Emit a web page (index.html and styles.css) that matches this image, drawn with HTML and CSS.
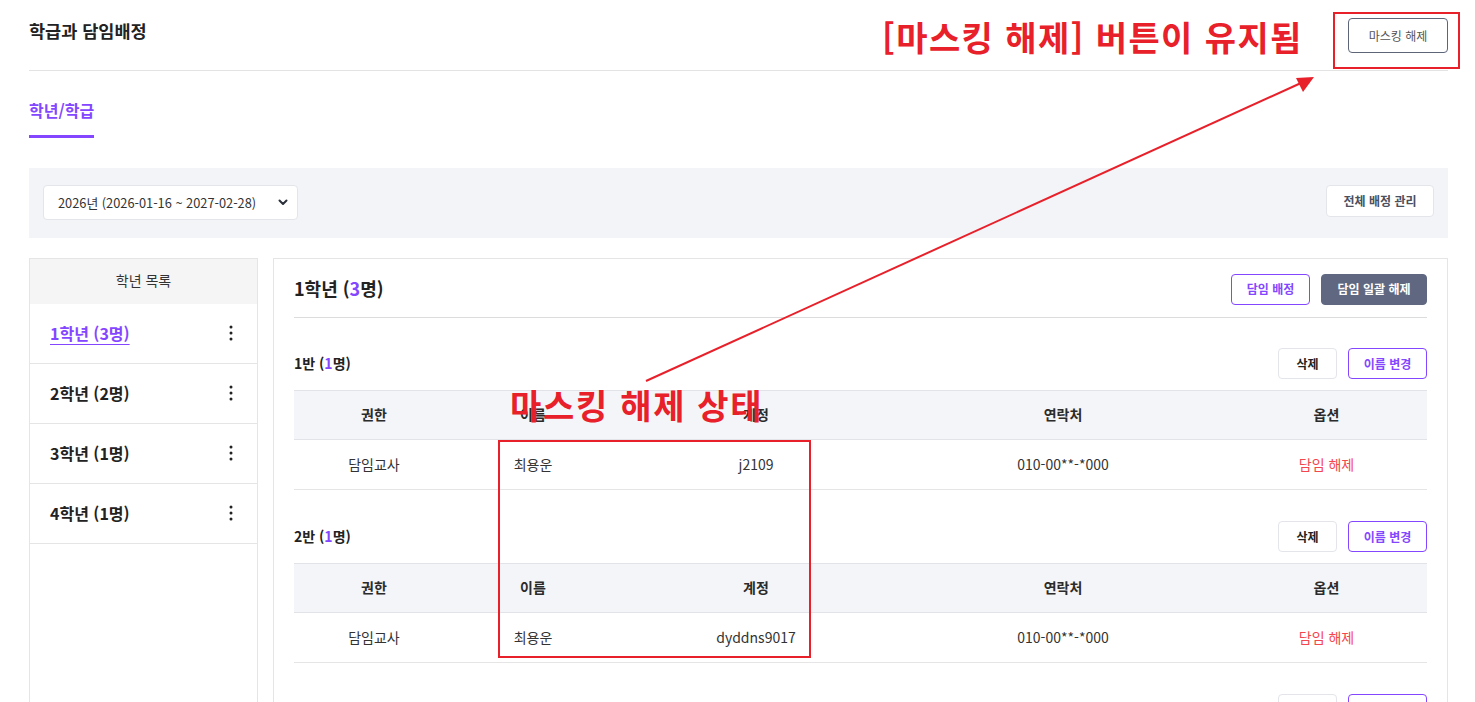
FILE: index.html
```html
<!DOCTYPE html>
<html lang="ko">
<head>
<meta charset="utf-8">
<title>학급과 담임배정</title>
<link rel="stylesheet" href="styles.css">
</head>
<body>
<div class="page">
  <header class="top">
    <h1 class="title">학급과 담임배정</h1>
    <button class="btn mask-btn">마스킹 해제</button>
  </header>

  <nav class="tabs">
    <a class="tab active">학년/학급</a>
  </nav>

  <div class="filter">
    <div class="select">
      <span>2026년 (2026-01-16 ~ 2027-02-28)</span>
      <svg class="chev" width="10" height="7" viewBox="0 0 10 7"><path d="M1.5 1.5 L5 5 L8.5 1.5" fill="none" stroke="#2a2f3a" stroke-width="2" stroke-linecap="round" stroke-linejoin="round"/></svg>
    </div>
    <button class="btn btn-white">전체 배정 관리</button>
  </div>

  <div class="content">
    <aside class="sidebar">
      <div class="side-head">학년 목록</div>
      <ul class="grade-list">
        <li class="grade active"><span class="grade-name">1학년 (3명)</span><svg class="kebab" width="4" height="16" viewBox="0 0 4 16"><circle cx="2" cy="2" r="1.5"/><circle cx="2" cy="8" r="1.5"/><circle cx="2" cy="14" r="1.5"/></svg></li>
        <li class="grade"><span class="grade-name">2학년 (2명)</span><svg class="kebab" width="4" height="16" viewBox="0 0 4 16"><circle cx="2" cy="2" r="1.5"/><circle cx="2" cy="8" r="1.5"/><circle cx="2" cy="14" r="1.5"/></svg></li>
        <li class="grade"><span class="grade-name">3학년 (1명)</span><svg class="kebab" width="4" height="16" viewBox="0 0 4 16"><circle cx="2" cy="2" r="1.5"/><circle cx="2" cy="8" r="1.5"/><circle cx="2" cy="14" r="1.5"/></svg></li>
        <li class="grade"><span class="grade-name">4학년 (1명)</span><svg class="kebab" width="4" height="16" viewBox="0 0 4 16"><circle cx="2" cy="2" r="1.5"/><circle cx="2" cy="8" r="1.5"/><circle cx="2" cy="14" r="1.5"/></svg></li>
      </ul>
    </aside>

    <section class="main">
      <div class="main-head">
        <h2 class="grade-title">1학년 (<em>3</em>명)</h2>
        <div class="actions">
          <button class="btn btn-purple w79">담임 배정</button>
          <button class="btn btn-dark">담임 일괄 해제</button>
        </div>
      </div>

      <div class="class-block">
        <div class="class-head">
          <h3 class="class-title">1반 (<em>1</em>명)</h3>
          <div class="actions">
            <button class="btn btn-white sm">삭제</button>
            <button class="btn btn-purple w79">이름 변경</button>
          </div>
        </div>
        <div class="tbl">
          <div class="tr th"><div>권한</div><div>이름</div><div>계정</div><div>연락처</div><div>옵션</div></div>
          <div class="tr td"><div>담임교사</div><div>최용운</div><div>j2109</div><div>010-00**-*000</div><div class="red">담임 해제</div></div>
        </div>
      </div>

      <div class="class-block">
        <div class="class-head">
          <h3 class="class-title">2반 (<em>1</em>명)</h3>
          <div class="actions">
            <button class="btn btn-white sm">삭제</button>
            <button class="btn btn-purple w79">이름 변경</button>
          </div>
        </div>
        <div class="tbl">
          <div class="tr th"><div>권한</div><div>이름</div><div>계정</div><div>연락처</div><div>옵션</div></div>
          <div class="tr td"><div>담임교사</div><div>최용운</div><div>dyddns9017</div><div>010-00**-*000</div><div class="red">담임 해제</div></div>
        </div>
      </div>

      <div class="class-block">
        <div class="class-head">
          <h3 class="class-title">3반 (<em>1</em>명)</h3>
          <div class="actions">
            <button class="btn btn-white sm">삭제</button>
            <button class="btn btn-purple w79">이름 변경</button>
          </div>
        </div>
      </div>
    </section>
  </div>

  <div class="anno anno-text1">[마스킹 해제] 버튼이 유지됨</div>
  <div class="anno anno-box1"></div>
  <div class="anno anno-text2">마스킹 해제 상태</div>
  <div class="anno anno-box2"></div>
  <svg class="anno anno-arrow" width="1475" height="702" viewBox="0 0 1475 702">
    <line x1="646" y1="381" x2="1301" y2="83" stroke="#e8202a" stroke-width="2"/>
    <polygon points="1314,77 1296,78 1303,92" fill="#e8202a"/>
  </svg>
</div>
</body>
</html>
```

FILE: styles.css
```css
* { box-sizing: border-box; }

body {
  margin: 0;
  background: #fff;
  color: #222;
  font-family: "Noto Sans CJK KR", "Noto Sans", sans-serif;
}

.page {
  position: relative;
  padding: 0 27px 60px 29px;
}

.btn {
  font-family: inherit;
  font-size: 12px;
  line-height: 1;
  border-radius: 4px;
  background: #fff;
  cursor: pointer;
  padding: 0;
}

/* header */
.top {
  height: 71px;
  display: flex;
  justify-content: space-between;
  align-items: flex-start;
  border-bottom: 1px solid #e3e3e3;
}
.title {
  margin: 0;
  padding-top: 19px;
  font-size: 17.5px;
  line-height: 24px;
  font-weight: 700;
  color: #222;
}
.mask-btn {
  margin-top: 18px;
  width: 100px;
  height: 35px;
  border: 1px solid #5d6579;
  color: #555;
  font-weight: 400;
}

/* tabs */
.tabs {
  padding-top: 27px;
}
.tab {
  display: inline-block;
  font-size: 16px;
  line-height: 22px;
  font-weight: 700;
  color: #8447ff;
  padding-bottom: 14px;
  border-bottom: 3px solid #8447ff;
}

/* filter bar */
.filter {
  margin-top: 30px;
  height: 70px;
  background: #f3f4f8;
  padding: 17px 14px;
  display: flex;
  justify-content: space-between;
  align-items: flex-start;
}
.select {
  width: 255px;
  height: 35px;
  background: #fff;
  border: 1px solid #e3e5ea;
  border-radius: 4px;
  display: flex;
  align-items: center;
  justify-content: space-between;
  padding: 0 9px 0 14px;
  font-size: 12.8px;
  color: #333;
}
.btn-white {
  width: 108px;
  height: 32px;
  border: 1px solid #e3e5ea;
  color: #4a5060;
  font-weight: 700;
}

/* content */
.content {
  margin-top: 20px;
  display: flex;
  gap: 15px;
  align-items: flex-start;
}

.sidebar {
  width: 229px;
  min-height: 620px;
  border: 1px solid #e5e5e5;
}
.side-head {
  height: 45px;
  padding-bottom: 4px;
  background: #f5f5f5;
  display: flex;
  align-items: center;
  justify-content: center;
  font-size: 14px;
  color: #333;
}
.grade-list {
  list-style: none;
  margin: 0;
  padding: 0;
}
.grade {
  height: 60px;
  padding: 0 24px 2px 20px;
  border-bottom: 1px solid #e5e5e5;
  display: flex;
  align-items: center;
  justify-content: space-between;
  font-size: 16px;
  font-weight: 700;
  color: #222;
}
.grade.active .grade-name {
  color: #8447ff;
  text-decoration: underline;
  text-underline-offset: 4px;
  text-decoration-thickness: 1px;
}
.kebab { fill: #222; }

.main {
  flex: 1;
  min-height: 620px;
  border: 1px solid #e5e5e5;
  padding: 15px 20px 40px;
}
.main-head {
  height: 44px;
  padding-bottom: 13px;
  border-bottom: 1px solid #dcdcdc;
  display: flex;
  justify-content: space-between;
  align-items: center;
}
.grade-title {
  margin: 0 0 2px;
  font-size: 18px;
  font-weight: 700;
  color: #222;
}
.grade-title em, .class-title em {
  font-style: normal;
  color: #8447ff;
}
.actions {
  display: flex;
  gap: 11px;
}
.btn-purple {
  height: 31px;
  border: 1px solid #8447ff;
  color: #8447ff;
  font-weight: 700;
}
.w79 { width: 79px; }
.btn-dark {
  width: 106px;
  height: 31px;
  border: 1px solid #5f6880;
  background: #5f6880;
  color: #fff;
  font-weight: 700;
}
.btn-white.sm {
  width: 59px;
  height: 31px;
  color: #222;
}

.class-block {
  margin-top: 30px;
}
.class-block + .class-block {
  margin-top: 31px;
}
.class-head {
  height: 31px;
  margin-bottom: 11px;
  display: flex;
  justify-content: space-between;
  align-items: center;
}
.class-title {
  margin: 0 0 2px;
  font-size: 14px;
  font-weight: 700;
  color: #222;
}

.tr {
  display: grid;
  grid-template-columns: 160px 158px 288px 326px 1fr;
  align-items: center;
  text-align: center;
  font-size: 14px;
}
.th {
  height: 50px;
  padding-bottom: 2px;
  background: #f4f5f9;
  border-top: 1px solid #e2e3e8;
  border-bottom: 1px solid #e2e3e8;
  font-weight: 600;
  color: #2b2b2b;
}
.td {
  height: 50px;
  padding-bottom: 2px;
  border-bottom: 1px solid #e5e5e5;
  color: #333;
}
.red { color: #f4464f; }

/* annotations (overlay) */
.anno {
  position: absolute;
  pointer-events: none;
}
.anno-text1 {
  left: 882px;
  top: 15px;
  font-size: 34px;
  line-height: 44px;
  letter-spacing: 1.4px;
  font-weight: 700;
  color: #e8202a;
  white-space: nowrap;
}
.anno-box1 {
  left: 1333px;
  top: 12px;
  width: 127px;
  height: 57px;
  border: 2px solid #e8202a;
}
.anno-text2 {
  left: 510px;
  top: 383px;
  font-size: 34px;
  line-height: 44px;
  letter-spacing: 1.7px;
  font-weight: 700;
  color: #e8202a;
  white-space: nowrap;
}
.anno-box2 {
  left: 498px;
  top: 440px;
  width: 313px;
  height: 218px;
  border: 2px solid #e8202a;
}
.anno-arrow {
  left: 0;
  top: 0;
}
```
